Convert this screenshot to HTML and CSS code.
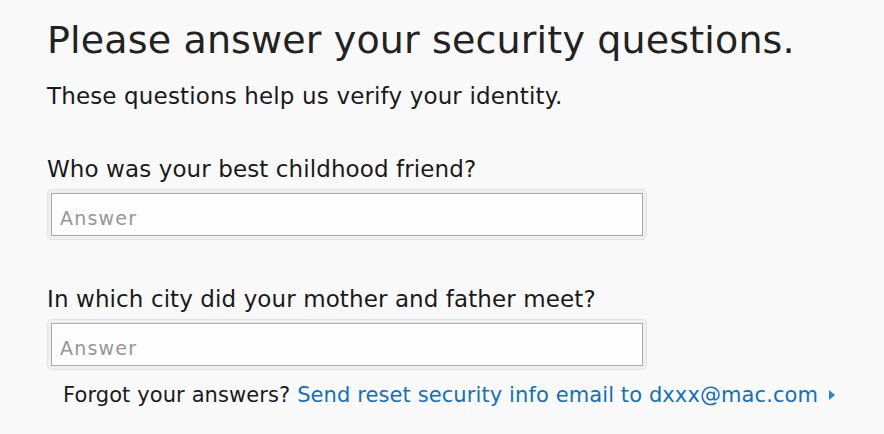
FILE: index.html
```html
<!DOCTYPE html>
<html lang="en">
<head>
<meta charset="utf-8">
<title>Security questions</title>
<link rel="stylesheet" href="styles.css">
</head>
<body>
<main class="page">
  <h1 class="title">Please answer your security questions.</h1>
  <p class="subtitle">These questions help us verify your identity.</p>
  <form class="questions">
    <label class="question">
      <span class="question-text">Who was your best childhood friend?</span>
      <span class="field"><input class="answer" type="text" placeholder="Answer"></span>
    </label>
    <label class="question question-second">
      <span class="question-text">In which city did your mother and father meet?</span>
      <span class="field"><input class="answer" type="text" placeholder="Answer"></span>
    </label>
  </form>
  <p class="forgot">Forgot your answers? <a class="reset-link" href="#">Send reset security info email to dxxx@mac.com<span class="chevron"></span></a></p>
</main>
</body>
</html>
```
FILE: styles.css
```css
html, body {
  margin: 0;
  padding: 0;
  background: #f9f9f9;
}
body {
  font-family: "DejaVu Sans", sans-serif;
  color: #1a1a1a;
}
.page {
  padding: 16px 0 0 47px;
  display: flex;
  flex-direction: column;
}
.title {
  margin: 0;
  font-size: 38px;
  line-height: 48px;
  font-weight: 400;
  letter-spacing: 0.15px;
  color: #222;
}
.subtitle {
  margin: 18px 0 0;
  font-size: 23px;
  line-height: 28px;
  letter-spacing: 0.15px;
  color: #1a1a1a;
}
.questions {
  display: flex;
  flex-direction: column;
  margin-top: 45px;
}
.question {
  display: flex;
  flex-direction: column;
}
.question-second {
  margin-top: 45px;
}
.question-text {
  font-size: 23px;
  line-height: 28px;
  letter-spacing: 0.1px;
}
.field {
  display: block;
  margin-top: 6px;
  width: 592px;
  padding: 3px;
  border: 1px solid #e2e2e2;
  border-radius: 5px;
  background: #efefef;
}
.answer {
  display: block;
  box-sizing: border-box;
  width: 592px;
  height: 43px;
  margin: 0;
  padding: 7px 8px 0;
  border: 1px solid #a9a9a9;
  background: #fdfdfd;
  font-family: "DejaVu Sans", sans-serif;
  font-size: 19px;
  letter-spacing: 1.2px;
  color: #333;
  outline: none;
}
.answer::placeholder {
  color: #969696;
}
.forgot {
  margin: 11px 0 0 16px;
  font-size: 21px;
  line-height: 28px;
  letter-spacing: 0.1px;
  color: #1a1a1a;
}
.reset-link {
  color: #1170c0;
  text-decoration: none;
}
.chevron {
  display: inline-block;
  margin-left: 11px;
  width: 0;
  height: 0;
  border-top: 5px solid transparent;
  border-bottom: 5px solid transparent;
  border-left: 6px solid #1a8ae0;
  vertical-align: 2px;
}
```
